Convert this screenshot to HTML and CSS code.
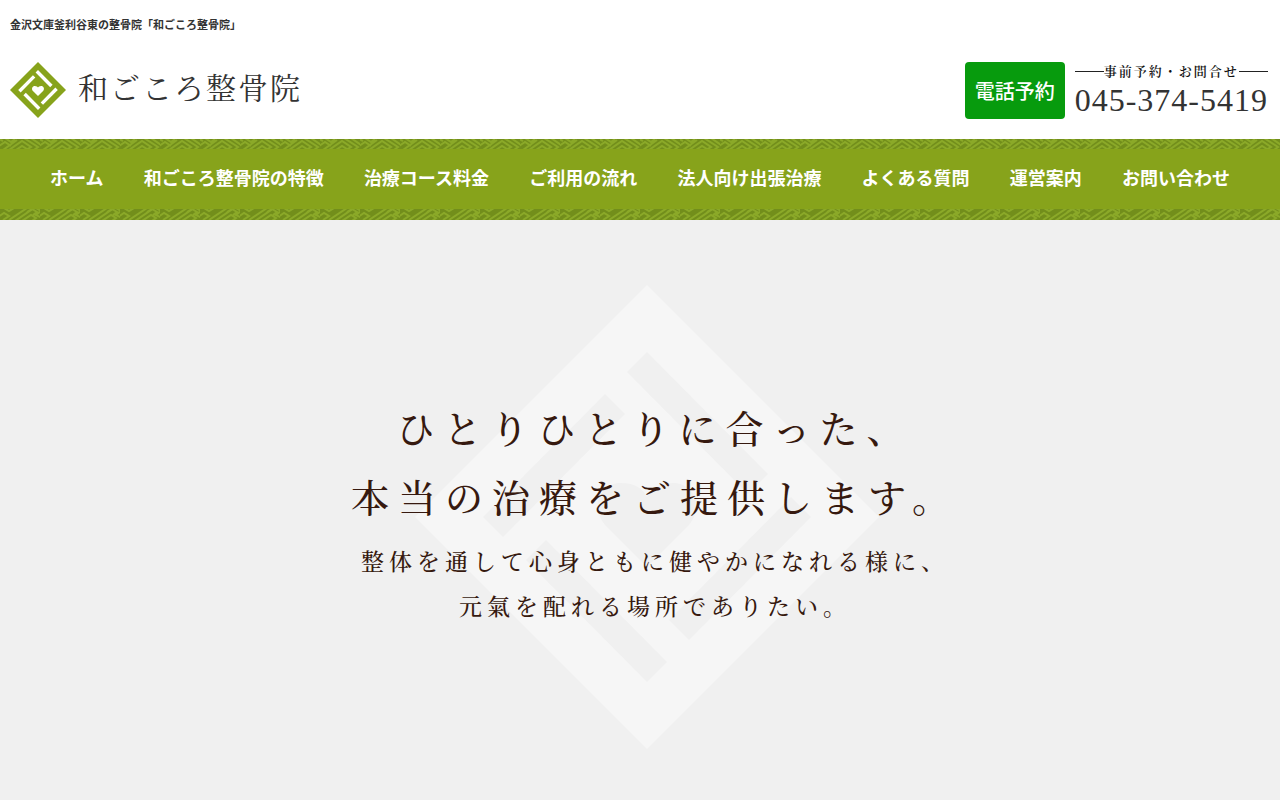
FILE: index.html
```html
<!DOCTYPE html>
<html lang="ja">
<head>
    <meta charset="UTF-8">
    <meta name="viewport" content="width=device-width, initial-scale=1.0">
    <title>和ごころ整骨院</title>
    <link rel="stylesheet" href="styles.css">
</head>
<body>
    <!-- Shared shapes -->
    <svg class="defs" width="0" height="0" aria-hidden="true">
        <symbol id="emblem" viewBox="-232 -232 464 464">
            <path fill-rule="evenodd" d="M0-232 232 0 0 232-232 0ZM0-165-20-145 101-23 121-43ZM-42-123-164 0-144 20-22-103ZM0 165 20 145-101 23-121 43ZM42 123 164 0 144-20 22 103ZM0 50-42 8C-58-12-46-34-26-34-12-34-4-28 0-20 4-28 12-34 26-34 46-34 58-12 42 8Z"/>
        </symbol>
        <pattern id="sayagata-top" width="40" height="10" patternUnits="userSpaceOnUse">
            <rect width="40" height="10" fill="#728e1b"/>
            <path d="M-1 7 5 3 11 7M3 11 17 1M9 11 22 2 31 8 26 11M16 11 22 7 27 10M24-1 38 8 34 11M31-1 44 8M5-1 11 3 15 0M-3-1 3 2" fill="none" stroke="#8ba928" stroke-width="2"/>
        </pattern>
        <pattern id="sayagata-bottom" width="40" height="11" patternUnits="userSpaceOnUse">
            <rect width="40" height="11" fill="#728e1b"/>
            <path d="M-2 8 4 4 9 7 3 11M4-1 9 2 14-1M9 11 27-1M15 12 34-1M22 12 31 6 36 9 32 12M27 3 32 0 37 3 33 6M36-1 41 2 36 6 42 9" fill="none" stroke="#8ba928" stroke-width="2"/>
        </pattern>
    </svg>

    <header class="header">
        <h1>金沢文庫釜利谷東の整骨院「和ごころ整骨院」</h1>
        <div class="header-main">
            <a href="#" class="logo">
                <svg class="logo-mark" aria-hidden="true"><use href="#emblem"/></svg>
                <span class="logo-text">和ごころ整骨院</span>
            </a>
            <div class="contact">
                <a href="tel:0453745419" class="reserve">電話予約</a>
                <div class="tel">
                    <p class="tel-label">事前予約・お問合せ</p>
                    <p class="tel-number">045-374-5419</p>
                </div>
            </div>
        </div>
    </header>

    <nav class="nav">
        <svg class="nav-pattern" aria-hidden="true"><rect width="100%" height="10" fill="url(#sayagata-top)"/></svg>
        <ul class="nav-list">
            <li><a href="#">ホーム</a></li>
            <li><a href="#feature">和ごころ整骨院の特徴</a></li>
            <li><a href="#price">治療コース料金</a></li>
            <li><a href="#flow">ご利用の流れ</a></li>
            <li><a href="#corporate">法人向け出張治療</a></li>
            <li><a href="#faq">よくある質問</a></li>
            <li><a href="#about">運営案内</a></li>
            <li><a href="#contact">お問い合わせ</a></li>
        </ul>
        <svg class="nav-pattern" aria-hidden="true"><rect width="100%" height="11" fill="url(#sayagata-bottom)"/></svg>
    </nav>

    <main class="hero">
        <svg class="hero-mark" aria-hidden="true"><use href="#emblem"/></svg>
        <div class="hero-copy">
            <h2>ひとりひとりに合った、<br>本当の治療をご提供します。</h2>
            <p>整体を通して心身ともに健やかになれる様に、<br>元氣を配れる場所でありたい。</p>
        </div>
    </main>
</body>
</html>
```

FILE: styles.css
```css
/* Basic reset */
* {
    margin: 0;
    padding: 0;
    box-sizing: border-box;
}

body {
    min-height: 100vh;
    display: flex;
    flex-direction: column;
    font-family: "Noto Sans CJK JP", sans-serif;
    color: #333;
    background-color: #fff;
}

a {
    color: inherit;
    text-decoration: none;
}

.defs {
    position: absolute;
}

/* Header */
.header {
    padding: 15px 12px 20px 10px;
}

.header h1 {
    font-size: 11px;
    line-height: 18px;
    font-weight: bold;
}

.header-main {
    display: flex;
    justify-content: space-between;
    align-items: flex-start;
    margin-top: 29px;
}

.logo {
    display: flex;
    align-items: center;
    gap: 12px;
}

.logo-mark {
    width: 56px;
    height: 56px;
    fill: #87a31b;
}

.logo-text {
    font-family: "Noto Serif CJK JP", "Noto Sans CJK JP", serif;
    font-size: 30px;
    line-height: 32px;
    letter-spacing: 2px;
    padding-bottom: 8px;
}

.contact {
    display: flex;
    align-items: center;
    gap: 10px;
}

.reserve {
    padding: 0 10px;
    border-radius: 4px;
    background-color: #079b0d;
    color: #fff;
    font-size: 20px;
    line-height: 57px;
    font-weight: 500;
}

.tel {
    font-family: "Liberation Serif", "Noto Serif CJK JP", "Noto Sans CJK JP", serif;
}

.tel-label {
    display: flex;
    align-items: center;
    font-size: 13px;
    line-height: 18px;
    letter-spacing: 2px;
    font-weight: 600;
    color: #111;
}

.tel-label::before,
.tel-label::after {
    content: "";
    flex: 1;
    height: 1px;
    background-color: #222;
}

.tel-number {
    font-size: 32px;
    line-height: 38px;
    letter-spacing: 1px;
}

/* Navigation */
.nav {
    background-color: #87a31b;
}

.nav-pattern {
    display: block;
    width: 100%;
    height: 11px;
}

.nav-list {
    display: flex;
    justify-content: space-between;
    padding: 12px 50px 17px;
    list-style: none;
    color: #fff;
    font-size: 18px;
    line-height: 30px;
    font-weight: bold;
    white-space: nowrap;
}

/* Hero */
.hero {
    flex: 1;
    display: grid;
    place-items: center;
    padding-left: 14px;
    background-color: #f0f0f0;
}

.hero-mark,
.hero-copy {
    grid-area: 1 / 1;
}

.hero-mark {
    width: 464px;
    height: 464px;
    margin-top: 13px;
    fill: #f6f6f6;
}

.hero-copy {
    padding-left: 16px;
    font-family: "Noto Serif CJK JP", "Noto Sans CJK JP", serif;
    font-weight: 500;
    color: #36190f;
    text-align: center;
    white-space: nowrap;
}

.hero-copy h2 {
    font-size: 38px;
    line-height: 69px;
    font-weight: 500;
    letter-spacing: 9px;
}

.hero-copy p {
    margin-top: 8px;
    font-size: 23px;
    line-height: 45px;
    letter-spacing: 5px;
}
```
